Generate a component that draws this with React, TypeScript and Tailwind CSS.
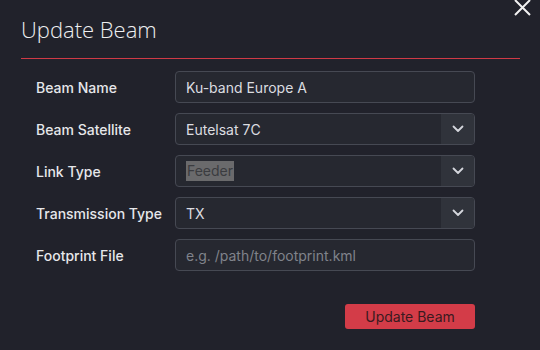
import React from "react";

const Chevron = () => (
  <svg width="12" height="8" viewBox="0 0 12 8" fill="none">
    <path d="M1.5 1.5L6 6L10.5 1.5" stroke="#d4d6dc" strokeWidth="1.8" strokeLinecap="round" strokeLinejoin="round" />
  </svg>
);

function Row({ label, children }: { label: string; children: React.ReactNode }) {
  return (
    <div className="flex items-center h-[32px]">
      <div className="w-[139px] text-[14px] font-medium text-[#e6e7ea]">{label}</div>
      <div className="w-[300px]">{children}</div>
    </div>
  );
}

function Select({ value, highlight }: { value: string; highlight?: boolean }) {
  return (
    <div className="flex h-[32px] rounded-[4px] border border-[#464953] bg-[#262830] overflow-hidden">
      <div className="flex-1 flex items-center pl-[10px] text-[14px] text-[#dcdde0]">
        {highlight ? (
          <span className="bg-[#6a6a6c] text-[#3b3c40] leading-[20px] px-[1px]">{value}</span>
        ) : (
          value
        )}
      </div>
      <div className="w-[33px] flex items-center justify-center bg-[#30333b]">
        <Chevron />
      </div>
    </div>
  );
}

export default function App() {
  return (
    <div className="w-[540px] h-[350px] bg-[#21222b] relative overflow-hidden" style={{ fontFamily: "Inter, 'Liberation Sans', sans-serif" }}>
      <button className="absolute right-[8px] top-[-2px] text-white">
        <svg width="19" height="19" viewBox="0 0 19 19">
          <path d="M2 2L17 17M17 2L2 17" stroke="#f2f2f2" strokeWidth="2" />
        </svg>
      </button>
      <div className="px-[21px] pt-[15px]">
        <h1 className="text-[22px] font-light text-[#eeeff1] leading-[28px]" style={{ fontFamily: "'Open Sans', 'Noto Sans', sans-serif" }}>
          Update Beam
        </h1>
        <div className="mt-[15px] h-[1px] w-[499px] bg-[#cf3a46]" />
      </div>
      <div className="pl-[36px] pt-[12px] flex flex-col gap-[10px]">
        <Row label="Beam Name">
          <div className="h-[32px] rounded-[4px] border border-[#464953] bg-[#262830] flex items-center pl-[10px] text-[14px] text-[#dcdde0]">
            Ku-band Europe A
          </div>
        </Row>
        <Row label="Beam Satellite">
          <Select value="Eutelsat 7C" />
        </Row>
        <Row label="Link Type">
          <Select value="Feeder" highlight />
        </Row>
        <Row label="Transmission Type">
          <Select value="TX" />
        </Row>
        <Row label="Footprint File">
          <div className="h-[32px] rounded-[4px] border border-[#464953] bg-[#262830] flex items-center pl-[10px] text-[14px] text-[#80838b]">
            e.g. /path/to/footprint.kml
          </div>
        </Row>
      </div>
      <div className="pl-[345px] pt-[33px]">
        <button className="w-[130px] h-[25px] rounded-[3px] bg-[#d33c48] text-[14px] text-[#3a1a1f] flex items-center justify-center">
          Update Beam
        </button>
      </div>
    </div>
  );
}
